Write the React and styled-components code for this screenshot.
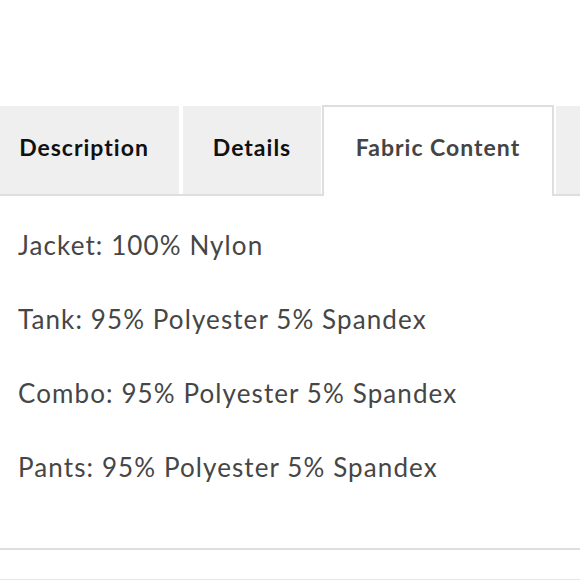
import React from "react";
import styled, { createGlobalStyle } from "styled-components";

const Global = createGlobalStyle`
  html, body { margin: 0; padding: 0; background: #fff; }
  body { width: 580px; height: 580px; overflow: hidden; font-family: Lato, "Noto Sans", sans-serif; }
`;

const Page = styled.div`
  width: 580px;
  height: 580px;
  overflow: hidden;
  padding-top: 103px;
  box-sizing: border-box;
`;

const TabList = styled.div`
  display: flex;
  align-items: flex-end;
  margin-left: -11px;
  height: 91px;
  border-bottom: 2px solid #dedede;
  width: 700px;
`;

const Tab = styled.div`
  box-sizing: border-box;
  flex: 0 0 ${(p) => p.$w}px;
  margin-right: ${(p) => p.$gap ?? 3}px;
  display: flex;
  align-items: center;
  justify-content: center;
  font-family: Lato, sans-serif;
  font-weight: 700;
  font-size: 23px;
  letter-spacing: 1px;
  height: ${(p) => (p.$active ? 91 : 88)}px;
  background: ${(p) => (p.$active ? "#fff" : "#efefef")};
  color: ${(p) => (p.$active ? "#444" : "#111")};
  border: ${(p) => (p.$active ? "2px solid #dedede" : "none")};
  border-bottom: none;
  margin-bottom: ${(p) => (p.$active ? "-2px" : "0")};
  padding-bottom: ${(p) => (p.$active ? "10px" : "6px")};
`;

const Panel = styled.div`
  padding: 31px 0 0 18px;
  height: 354px;
  box-sizing: border-box;
  border-bottom: 2px solid #dedede;
`;

const Line = styled.p`
  margin: 0 0 ${(p) => (p.$last ? 0 : 38)}px;
  font-family: Lato, sans-serif;
  font-weight: 400;
  font-size: 26px;
  line-height: 36px;
  color: #464646;
  letter-spacing: 1.1px;
`;

const BottomRule = styled.div`
  margin-top: 29px;
  border-top: 1px solid #e6e6e6;
`;

export default function App() {
  const lines = [
    "Jacket: 100% Nylon",
    "Tank: 95% Polyester 5% Spandex",
    "Combo: 95% Polyester 5% Spandex",
    "Pants: 95% Polyester 5% Spandex",
  ];
  return (
    <>
      <Global />
      <Page>
        <TabList>
          <Tab $w={190} $gap={4}>Description</Tab>
          <Tab $w={138} $gap={1}>Details</Tab>
          <Tab $w={232} $gap={2} $active>Fabric Content</Tab>
          <Tab $w={120}>&nbsp;</Tab>
        </TabList>
        <Panel>
          {lines.map((l, i) => (
            <Line key={l} $last={i === lines.length - 1}>{l}</Line>
          ))}
        </Panel>
        <BottomRule />
      </Page>
    </>
  );
}
